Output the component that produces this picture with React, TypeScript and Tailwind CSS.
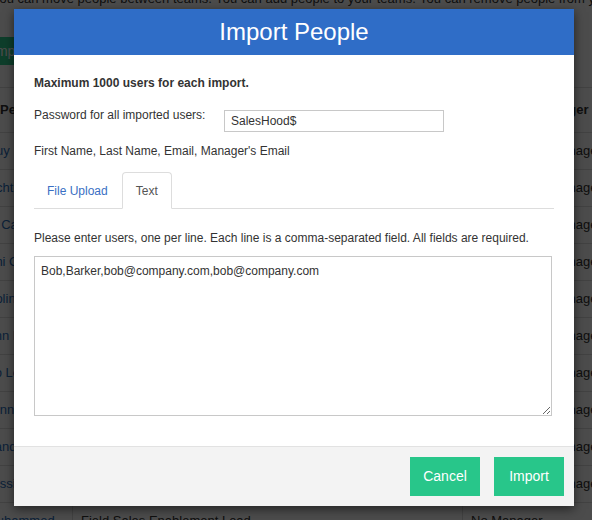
import { useState } from "react";

type Person = {
  name: string;
  title: string;
  manager: string;
};

const people: Person[] = [
  { name: "Guy Ross", title: "Account Executive", manager: "District Sales Manager" },
  { name: "Lichtman Ko", title: "Sales Engineer", manager: "District Sales Manager" },
  { name: "Al Carter", title: "Account Manager", manager: "District Sales Manager" },
  { name: "Chi Chin", title: "Inside Sales Rep", manager: "District Sales Manager" },
  { name: "Colin Reyes", title: "Account Executive", manager: "District Sales Manager" },
  { name: "Ann Marsh", title: "Sales Engineer", manager: "District Sales Manager" },
  { name: "Bo Lee", title: "Account Manager", manager: "District Sales Manager" },
  { name: "Jenna Wu", title: "Inside Sales Rep", manager: "District Sales Manager" },
  { name: "Sandra Ng", title: "Account Executive", manager: "District Sales Manager" },
  { name: "Jessica Yu", title: "Sales Engineer", manager: "District Sales Manager" },
  { name: "Muhammed", title: "Field Sales Enablement Lead", manager: "No Manager" },
];

const TeamPage = () => {
  return (
    <div className="-ml-[20px] -mt-[10px] w-[720px] text-[13px] text-[#333]">
      <p className="whitespace-nowrap pl-[12px] leading-[18px]">
        You can move people between teams. You can add people to your teams.
        You can remove people from your teams.
      </p>
      <button className="mt-[29px] h-[28px] rounded-[2px] bg-[#2fd08f] px-[12px] text-[14px] text-white">
        Import People
      </button>

      <div className="mt-[22px] border-t border-[#ddd]">
        <div className="grid h-[44px] grid-cols-[92px_390px_1fr] items-center font-bold">
          <div className="pl-[20px]">People</div>
          <div className="pl-[8px]">Title</div>
          <div className="pl-[8px]">Reporting Manager</div>
        </div>
        {people.map((person) => (
          <div
            key={person.name}
            className="grid h-[37px] grid-cols-[92px_390px_1fr] border-t border-[#ddd]"
          >
            <div className="flex items-center pl-[6px] text-[#2a6ebb]">
              {person.name}
            </div>
            <div className="flex items-center border-l border-[#ddd] pl-[8px]">
              {person.title}
            </div>
            <div className="flex items-center border-l border-[#ddd] pl-[8px]">
              {person.manager}
            </div>
          </div>
        ))}
      </div>
    </div>
  );
};

type TabName = "file" | "text";

const ImportPeopleModal = () => {
  const [tab, setTab] = useState<TabName>("text");
  const [password, setPassword] = useState("SalesHood$");
  const [users, setUsers] = useState(
    "Bob,Barker,bob@company.com,bob@company.com"
  );

  return (
    <div className="absolute left-[14px] top-[9px] w-[560px] bg-white shadow-[0_3px_10px_rgba(0,0,0,0.55)]">
      <div className="flex h-[46px] items-center justify-center bg-[#2f6dc7]">
        <h2 className="text-[24px] leading-none text-white">Import People</h2>
      </div>

      <div className="px-5 pb-[30px] pt-5 text-[12px] text-[#333]">
        <p className="font-bold leading-[17px]">
          Maximum 1000 users for each import.
        </p>

        <div className="mt-[15px] flex items-start">
          <label className="w-[190px] leading-[17px]">
            Password for all imported users:
          </label>
          <input
            className="mt-[3px] h-[22px] w-[220px] border border-[#c8c8c8] px-[6px] text-[12px] text-[#333] outline-none"
            value={password}
            onChange={(e) => setPassword(e.target.value)}
          />
        </div>

        <p className="mt-[11px] leading-[17px]">
          First Name, Last Name, Email, Manager's Email
        </p>

        <div className="mt-[12px] flex h-[37px] border-b border-[#ddd]">
          <button
            className={`-mb-px mr-[1px] h-[37px] rounded-t-[4px] border px-[12px] ${
              tab === "file"
                ? "border-[#ddd] border-b-white bg-white text-[#555]"
                : "border-transparent text-[#3a6fc4]"
            }`}
            onClick={() => setTab("file")}
          >
            File Upload
          </button>
          <button
            className={`-mb-px h-[37px] rounded-t-[4px] border px-[13px] ${
              tab === "text"
                ? "border-[#ddd] border-b-white bg-white text-[#555]"
                : "border-transparent text-[#3a6fc4]"
            }`}
            onClick={() => setTab("text")}
          >
            Text
          </button>
        </div>

        <p className="mt-[21px] leading-[17px]">
          Please enter users, one per line. Each line is a comma-separated
          field. All fields are required.
        </p>

        <textarea
          className="mt-[9px] block h-[160px] w-[518px] border border-[#c8c8c8] px-[6px] py-[6px] text-[12px] leading-[17px] text-[#333] outline-none"
          value={users}
          onChange={(e) => setUsers(e.target.value)}
        />
      </div>

      <div className="flex h-[60px] items-center justify-end gap-[14px] border-t border-[#e2e2e2] bg-[#f3f3f3] pr-[10px]">
        <button className="h-[39px] w-[70px] bg-[#28c68a] text-[14px] text-white">
          Cancel
        </button>
        <button className="h-[39px] w-[70px] bg-[#28c68a] text-[14px] text-white">
          Import
        </button>
      </div>
    </div>
  );
};

export default function App() {
  return (
    <div className="relative h-[520px] w-[592px] overflow-hidden bg-white font-['Liberation_Sans',Arial,sans-serif]">
      <TeamPage />
      <div className="absolute inset-0 bg-black/70" />
      <ImportPeopleModal />
    </div>
  );
}
